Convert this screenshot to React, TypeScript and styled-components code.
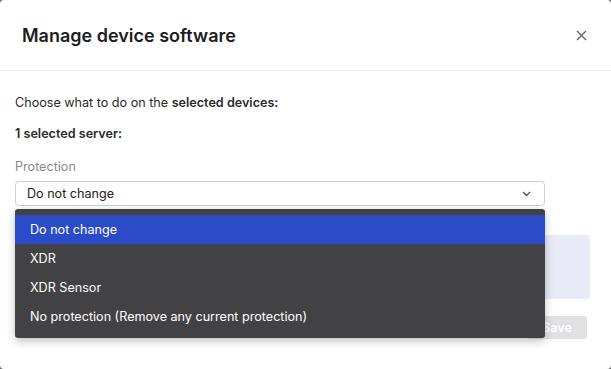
import React from 'react'
import styled, { createGlobalStyle } from 'styled-components'

const Global = createGlobalStyle`
  html, body {
    margin: 0;
    padding: 0;
    background: #6b6b6b;
  }
  body {
    font-family: Inter, "Noto Sans", sans-serif;
    color: #222;
  }
`

const Modal = styled.div`
  position: relative;
  width: 611px;
  height: 369px;
  background: #fff;
  border-radius: 4px;
  overflow: hidden;
`

const Header = styled.div`
  height: 70px;
  padding: 0 22px;
  display: flex;
  align-items: center;
  justify-content: space-between;
  border-bottom: 1px solid #e9e9e9;
`

const Title = styled.h2`
  margin: 0;
  font-size: 18px;
  font-weight: 600;
  color: #1d1d1f;
`

const Close = styled.button`
  border: 0;
  background: none;
  padding: 0;
  width: 14px;
  height: 14px;
  display: flex;
  align-items: center;
  justify-content: center;
  margin-right: 1px;
`

const Body = styled.div`
  position: relative;
  padding: 23px 21px 0 15px;
`

const Text = styled.p<{ $bold?: boolean; $muted?: boolean }>`
  margin: 0 0 13px;
  font-size: 12.6px;
  line-height: 18px;
  font-weight: ${(p) => (p.$bold ? 600 : 400)};
  color: ${(p) => (p.$muted ? '#8a8a8a' : '#2a2a2a')};
  b {
    font-weight: 600;
  }
`

const Label = styled(Text)`
  margin: 15px 0 5px;
`

const Select = styled.div`
  box-sizing: border-box;
  width: 530px;
  height: 25px;
  border: 1px solid #cfcfcf;
  border-radius: 4px;
  padding: 0 13px 0 11px;
  display: flex;
  align-items: center;
  justify-content: space-between;
  font-size: 12.6px;
  color: #222;
`

const InfoBox = styled.div`
  margin-top: 29px;
  height: 64px;
  background: #e8eaf8;
  border-radius: 4px;
`

const Footer = styled.div`
  display: flex;
  justify-content: flex-end;
  padding: 17px 3px 0 0;
`

const SaveButton = styled.button`
  height: 23px;
  width: 60px;
  border: 0;
  border-radius: 3px;
  background: #e1e1e3;
  color: #fff;
  font-family: inherit;
  font-size: 12.6px;
  font-weight: 600;
`

const Menu = styled.ul`
  position: absolute;
  left: 15px;
  top: 138px;
  box-sizing: border-box;
  width: 530px;
  margin: 0;
  padding: 6px 0 7px;
  list-style: none;
  background: #424244;
  border-radius: 3px;
  box-shadow: 0 3px 8px rgba(0, 0, 0, 0.25);
`

const Item = styled.li<{ $active?: boolean }>`
  height: 29px;
  padding-left: 15px;
  display: flex;
  align-items: center;
  font-size: 12.6px;
  color: #fff;
  background: ${(p) => (p.$active ? '#2b4bc8' : 'transparent')};
`

const options = [
  'Do not change',
  'XDR',
  'XDR Sensor',
  'No protection (Remove any current protection)',
]

export default function App() {
  return (
    <>
      <Global />
      <Modal>
        <Header>
          <Title>Manage device software</Title>
          <Close aria-label="Close">
            <svg width="11" height="11" viewBox="0 0 11 11">
              <path d="M1 1L10 10M10 1L1 10" stroke="#666" strokeWidth="1.4" />
            </svg>
          </Close>
        </Header>
        <Body>
          <Text>
            Choose what to do on the <b>selected devices:</b>
          </Text>
          <Text $bold>1 selected server:</Text>
          <Label $muted>Protection</Label>
          <Select>
            <span>Do not change</span>
            <svg width="9" height="6" viewBox="0 0 9 6">
              <path d="M1 1L4.5 4.5L8 1" fill="none" stroke="#555" strokeWidth="1.4" />
            </svg>
          </Select>
          <InfoBox />
          <Footer>
            <SaveButton>Save</SaveButton>
          </Footer>
          <Menu>
            {options.map((o, i) => (
              <Item key={o} $active={i === 0}>
                {o}
              </Item>
            ))}
          </Menu>
        </Body>
      </Modal>
    </>
  )
}
